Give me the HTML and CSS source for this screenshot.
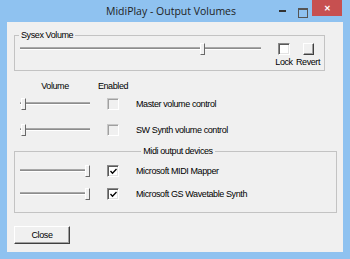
FILE: index.html
```html
<!DOCTYPE html>
<html lang="en">

<head>
   <meta charset="UTF-8">
   <meta name="viewport" content="width=device-width, initial-scale=1.0">
   <title>MidiPlay - Output Volumes</title>
   <link rel="stylesheet" href="styles.css">
</head>

<body>

   <div class="window">
       <div class="titlebar">
           <span class="title">MidiPlay - Output Volumes</span>
           <div class="caption">
               <span class="cap-min"></span>
               <span class="cap-max"></span>
               <span class="cap-close">&#x2715;</span>
           </div>
       </div>

       <div class="client">
           <fieldset class="group sysex">
               <legend>Sysex Volume</legend>
               <div class="slider wide"><span class="track"></span><span class="thumb" style="left: 180px"></span></div>
               <div class="toggle lock">
                   <span class="check"></span>
                   <span class="toggle-label">Lock</span>
               </div>
               <div class="toggle revert">
                   <span class="push"></span>
                   <span class="toggle-label">Revert</span>
               </div>
           </fieldset>

           <div class="channels">
               <div class="row head">
                   <span class="col-vol">Volume</span>
                   <span class="col-en">Enabled</span>
               </div>
               <div class="row first">
                   <div class="slider"><span class="track"></span><span class="thumb" style="left: 1px"></span></div>
                   <span class="check disabled"></span>
                   <span class="name">Master volume control</span>
               </div>
               <div class="row">
                   <div class="slider"><span class="track"></span><span class="thumb" style="left: 1px"></span></div>
                   <span class="check disabled"></span>
                   <span class="name">SW Synth volume control</span>
               </div>
           </div>

           <fieldset class="group midi">
               <legend>Midi output devices</legend>
               <div class="row">
                   <div class="slider"><span class="track"></span><span class="thumb" style="left: 65px"></span></div>
                   <span class="check"><svg width="7" height="7" viewBox="0 0 7 7"><polyline points="0.5,3 2.5,5.3 6.5,1" fill="none" stroke="#000" stroke-width="1.3"/></svg></span>
                   <span class="name">Microsoft MIDI Mapper</span>
               </div>
               <div class="row second">
                   <div class="slider"><span class="track"></span><span class="thumb" style="left: 65px"></span></div>
                   <span class="check"><svg width="7" height="7" viewBox="0 0 7 7"><polyline points="0.5,3 2.5,5.3 6.5,1" fill="none" stroke="#000" stroke-width="1.3"/></svg></span>
                   <span class="name">Microsoft GS Wavetable Synth</span>
               </div>
           </fieldset>

           <button type="button" class="close-button">Close</button>
       </div>
   </div>

</body>

</html>
```

FILE: styles.css
```css
* {
    box-sizing: border-box;
}

body {
    margin: 0;
    font-family: "Liberation Sans", Arial, sans-serif;
}

.window {
    width: 350px;
    height: 259px;
    background-color: #8fc2f0;
    display: flex;
    flex-direction: column;
}

/* title bar */
.titlebar {
    height: 22px;
    display: grid;
    grid-template-columns: 1fr auto 1fr;
    padding-right: 8px;
}

.title {
    grid-column: 2;
    align-self: center;
    font-family: "Open Sans", sans-serif;
    font-size: 10.5px;
    line-height: 14px;
    padding-bottom: 1px;
    color: #1e1e1e;
}

.caption {
    grid-column: 3;
    justify-self: end;
    display: flex;
    height: 16px;
}

.cap-min {
    width: 24px;
    display: flex;
    justify-content: center;
    padding-top: 10px;
}

.cap-min::before {
    content: "";
    width: 7px;
    height: 2px;
    background-color: #333;
}

.cap-max {
    width: 18px;
    display: flex;
    justify-content: center;
    padding-top: 8px;
}

.cap-max::before {
    content: "";
    width: 8px;
    height: 7px;
    border: 1px solid #555;
    border-top-width: 2px;
}

.cap-close {
    width: 30px;
    height: 16px;
    background-color: #c75050;
    color: white;
    font-size: 8px;
    font-weight: bold;
    display: flex;
    justify-content: center;
    align-items: center;
}

/* dialog area */
.client {
    flex: 1;
    margin: 0 7px 7px 7px;
    background-color: #f0f0f0;
    padding: 8px 0 0 7px;
    font-size: 9px;
    letter-spacing: -0.4px;
    line-height: 10px;
    color: #000;
    display: flex;
    flex-direction: column;
    align-items: flex-start;
}

.group {
    margin: 0;
    min-width: 0;
    border: 1px solid #c3c3c3;
}

.group legend {
    padding: 0 2px;
    line-height: 10px;
}

.sysex {
    width: 311px;
    padding: 3px 0 3px 5px;
    display: flex;
    align-items: flex-start;
}

.sysex legend {
    margin-left: -1px;
}

.midi {
    width: 323px;
    margin-top: 10px;
    padding: 9px 0 12px 5px;
}

.midi legend {
    margin: 0 auto;
}

/* trackbar */
.slider {
    position: relative;
    width: 70px;
    height: 12px;
    padding-top: 4px;
}

.slider.wide {
    width: 241px;
}

.track {
    display: block;
    height: 3px;
    background-color: #8c8c8c;
    border-top: 1px solid #a8a8a8;
    border-bottom: 1px solid #fff;
}

.thumb {
    position: absolute;
    top: 0;
    width: 5px;
    height: 12px;
    background-color: #f0f0f0;
    border-left: 1px solid #fff;
    border-top: 1px solid #fff;
    border-right: 1px solid #696969;
    border-bottom: 1px solid #696969;
}

/* checkboxes and buttons */
.check {
    width: 12px;
    height: 12px;
    background-color: #fff;
    border: 1px solid;
    border-color: #8a8a8a #fff #fff #8a8a8a;
    box-shadow: inset 1px 1px 0 #5a5a5a, inset -1px -1px 0 #e3e3e3;
    display: flex;
    justify-content: center;
    align-items: center;
    justify-self: center;
}

.check.disabled {
    background-color: #f0f0f0;
    border-color: #c8c8c8 #fff #fff #c8c8c8;
    box-shadow: inset 1px 1px 0 #a0a0a0;
}

.toggle {
    display: flex;
    flex-direction: column;
    align-items: center;
}

.toggle.lock {
    width: 22px;
    margin-left: 12px;
}

.toggle.revert {
    width: 26px;
}

.toggle-label {
    margin-top: 2px;
}

.push {
    width: 11px;
    height: 12px;
    background-color: #f0f0f0;
    border: 1px solid;
    border-color: #fff #404040 #404040 #fff;
    box-shadow: inset -1px -1px 0 #a0a0a0;
}

/* channel rows */
.channels {
    margin: 10px 0 0 6px;
}

.row {
    display: grid;
    grid-template-columns: 70px 40px 1fr;
    column-gap: 3px;
    align-items: center;
    height: 12px;
}

.row.head {
    height: 10px;
}

.row.first {
    margin-top: 7px;
}

.channels .row + .row:not(.first) {
    margin-top: 14px;
}

.row.second {
    margin-top: 11px;
}

.col-vol,
.col-en {
    text-align: center;
}

.name {
    white-space: nowrap;
}

.close-button {
    margin-top: 13px;
    width: 56px;
    height: 18px;
    padding: 0;
    font-family: inherit;
    font-size: 9px;
    letter-spacing: -0.4px;
    color: #000;
    background-color: #f0f0f0;
    border: 1px solid;
    border-color: #fff #404040 #404040 #fff;
    box-shadow: inset -1px -1px 0 #a0a0a0;
}
```
